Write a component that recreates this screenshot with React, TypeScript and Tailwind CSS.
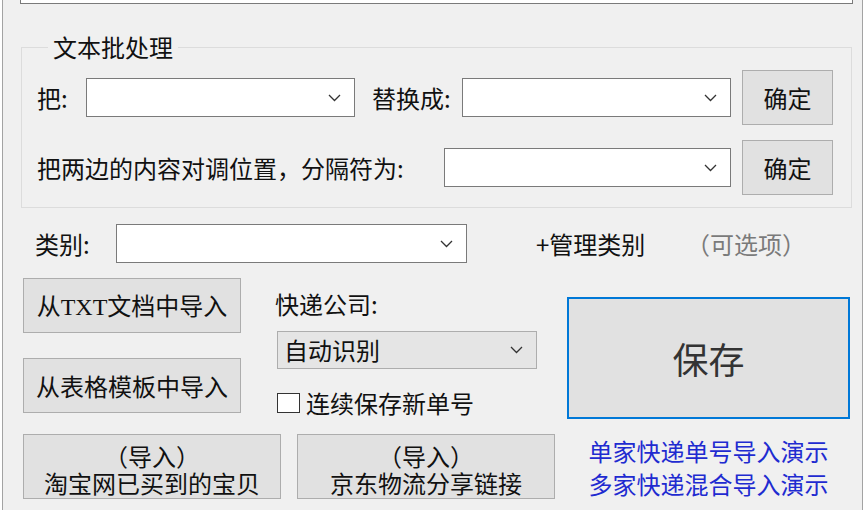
import React from 'react';

const font = { fontFamily: '"Noto Sans CJK SC", "Noto Sans", sans-serif' };

const Chevron = () => (
  <svg width="13" height="8" viewBox="0 0 13 8" className="shrink-0">
    <polyline points="1,1 6.5,6.5 12,1" fill="none" stroke="#333" strokeWidth="1.3" />
  </svg>
);

const Combo = ({ className = '', grey = false, text = '' }: { className?: string; grey?: boolean; text?: string }) => (
  <div
    className={`flex items-center justify-between pr-[13px] ${
      grey ? 'bg-[#e5e5e5] border border-[#adadad] pl-[6px]' : 'bg-white border border-[#7a7a7a]'
    } ${className}`}
  >
    <span className="text-[24px] leading-[28px] text-[#111]">{text}</span>
    <Chevron />
  </div>
);

const Btn = ({ className = '', children }: { className?: string; children: React.ReactNode }) => (
  <div
    className={`flex flex-col items-center justify-center bg-[#e1e1e1] border border-[#adadad] text-[24px] leading-[28px] text-[#111] ${className}`}
  >
    {children}
  </div>
);

export default function App() {
  return (
    <div className="w-[868px] h-[510px] bg-white overflow-hidden" style={font}>
      <div className="ml-[2px] w-[861px] h-full bg-[#f0f0f0] border-l border-r border-[#a3a3a3]">
        {/* text box above (only its lower edge shows) */}
        <div className="ml-[17px] w-[833px] h-[4px] bg-white border-x border-b border-[#7a7a7a]" />

        {/* 文本批处理 */}
        <fieldset className="mt-[29px] ml-[18px] w-[831px] border border-[#dcdcdc] pt-[9px] pb-[12px] pl-[15px]">
          <legend className="ml-[11px] px-[5px] text-[24px] leading-[28px] text-[#111]">文本批处理</legend>

          <div className="flex items-center h-[55px]">
            <span className="w-[49px] text-[24px] leading-[28px] text-[#111]">把:</span>
            <Combo className="w-[269px] h-[39px]" />
            <span className="ml-[17px] w-[90px] text-[24px] leading-[28px] text-[#111]">替换成:</span>
            <Combo className="w-[269px] h-[39px]" />
            <Btn className="ml-[11px] w-[91px] h-[55px]">确定</Btn>
          </div>

          <div className="flex items-center h-[55px] mt-[15px]">
            <span className="w-[407px] text-[24px] leading-[28px] text-[#111]">把两边的内容对调位置，分隔符为:</span>
            <Combo className="w-[287px] h-[39px]" />
            <Btn className="ml-[11px] w-[91px] h-[55px]">确定</Btn>
          </div>
        </fieldset>

        {/* 类别 */}
        <div className="flex items-center mt-[16px] pl-[32px] h-[39px]">
          <span className="w-[81px] text-[24px] leading-[28px] text-[#111]">类别:</span>
          <Combo className="w-[351px] h-[39px]" />
          <span className="ml-[69px] w-[150px] text-[24px] leading-[28px] text-[#111]">+管理类别</span>
          <span className="text-[24px] leading-[28px] text-[#7a7a7a]">（可选项）</span>
        </div>

        <div className="flex mt-[15px] pl-[20px]">
          <div className="w-[532px]">
            <div className="flex h-[135px]">
              <div className="flex flex-col gap-[25px]">
                <Btn className="w-[218px] h-[55px]">
                  <span>
                    从<span style={{ fontFamily: '"Liberation Serif", serif' }}>TXT</span>文档中导入
                  </span>
                </Btn>
                <Btn className="w-[218px] h-[55px]">从表格模板中导入</Btn>
              </div>
              <div className="ml-[36px] flex flex-col">
                <span className="mt-[12px] -ml-[2px] text-[24px] leading-[28px] text-[#111]">快递公司:</span>
                <Combo grey text="自动识别" className="mt-[13px] w-[260px] h-[38px]" />
                <div className="mt-[24px] flex items-center h-[20px]">
                  <div className="w-[23px] h-[20px] bg-white border border-[#333]" />
                  <span className="ml-[6px] text-[24px] leading-[28px] text-[#111]">连续保存新单号</span>
                </div>
              </div>
            </div>

            <div className="flex gap-[16px] mt-[21px]">
              <Btn className="w-[258px] h-[65px] pt-[5px]">
                <span className="leading-[27px]">（导入）</span>
                <span className="leading-[27px]">淘宝网已买到的宝贝</span>
              </Btn>
              <Btn className="w-[258px] h-[65px] pt-[5px]">
                <span className="leading-[27px]">（导入）</span>
                <span className="leading-[27px]">京东物流分享链接</span>
              </Btn>
            </div>
          </div>

          <div className="ml-[12px] w-[283px] flex flex-col items-center">
            <div className="mt-[19px] w-[283px] h-[122px] flex items-center justify-center bg-[#e1e1e1] border-2 border-[#0078d7] text-[36px] leading-[40px] text-[#333]">
              保存
            </div>
            <div className="mt-[15px] flex flex-col items-center text-[24px] leading-[33px] text-[#1f2bd0]">
              <span>单家快递单号导入演示</span>
              <span>多家快递混合导入演示</span>
            </div>
          </div>
        </div>
      </div>
    </div>
  );
}
